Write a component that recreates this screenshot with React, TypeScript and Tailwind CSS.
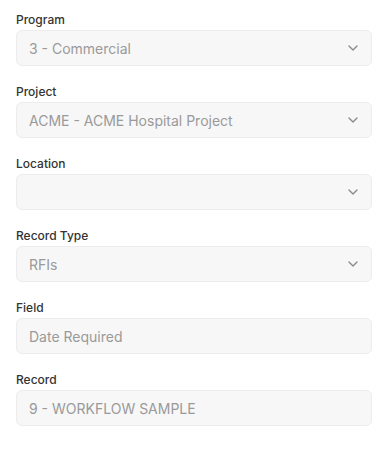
import React from "react";

const Chevron = () => (
  <svg width="16" height="16" viewBox="0 0 24 24" fill="none" stroke="#8a8a8a" strokeWidth="2" strokeLinecap="round" strokeLinejoin="round">
    <path d="m6 9 6 6 6-6" />
  </svg>
);

const fields: { label: string; value: string; select: boolean }[] = [
  { label: "Program", value: "3 - Commercial", select: true },
  { label: "Project", value: "ACME - ACME Hospital Project", select: true },
  { label: "Location", value: "", select: true },
  { label: "Record Type", value: "RFIs", select: true },
  { label: "Field", value: "Date Required", select: false },
  { label: "Record", value: "9 - WORKFLOW SAMPLE", select: false },
];

export default function App() {
  return (
    <div className="w-[379px] h-[455px] bg-white pl-4 pr-[7px] pt-[10px] flex flex-col gap-4" style={{ fontFamily: "Inter, 'Noto Sans', sans-serif" }}>
      {fields.map((f) => (
        <div key={f.label} className="flex flex-col">
          <div className="h-5 leading-5 text-[12px] font-medium text-[#333333]">{f.label}</div>
          <div className="h-9 rounded-md border border-[#ececec] bg-[#f7f7f7] flex items-center pl-3 pr-[10px]">
            <span className="flex-1 text-[14px] text-[#9a9a9a] truncate">{f.value}</span>
            {f.select && <Chevron />}
          </div>
        </div>
      ))}
    </div>
  );
}
